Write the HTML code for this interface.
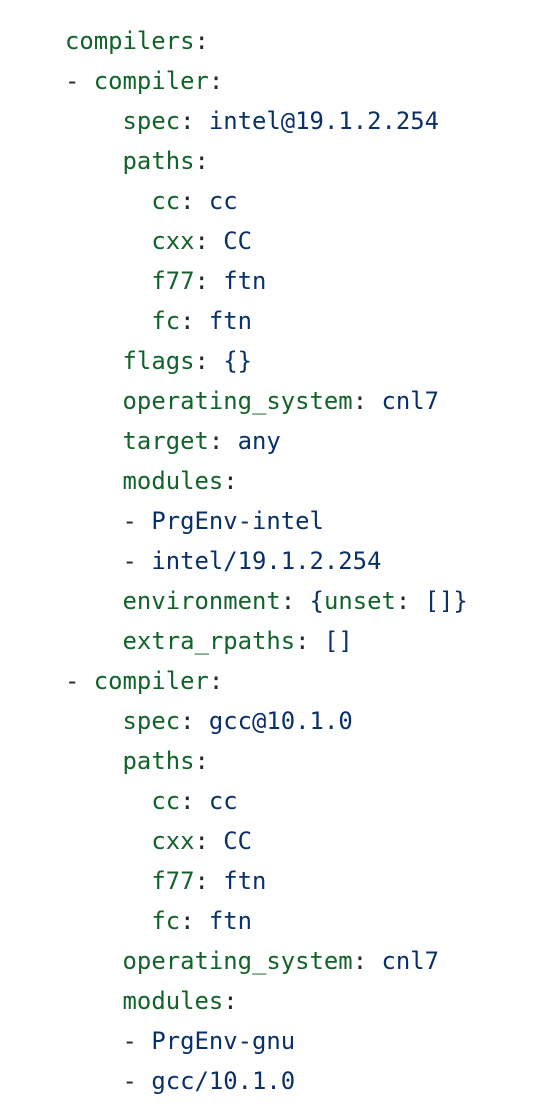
<!DOCTYPE html>
<html><head><style>
html,body{margin:0;padding:0;background:#fff;width:538px;height:1120px;overflow:hidden}
pre{margin:0;position:absolute;left:65px;top:21px;font-family:"DejaVu Sans Mono","Liberation Mono",monospace;font-size:23.9px;line-height:40px;color:#24292f}
.k{color:#116329}.v{color:#0a3069}
</style></head><body>
<pre><span class="k">compilers</span>:
- <span class="k">compiler</span>:
    <span class="k">spec</span>: <span class="v">intel@19.1.2.254</span>
    <span class="k">paths</span>:
      <span class="k">cc</span>: <span class="v">cc</span>
      <span class="k">cxx</span>: <span class="v">CC</span>
      <span class="k">f77</span>: <span class="v">ftn</span>
      <span class="k">fc</span>: <span class="v">ftn</span>
    <span class="k">flags</span>: <span class="v">{}</span>
    <span class="k">operating_system</span>: <span class="v">cnl7</span>
    <span class="k">target</span>: <span class="v">any</span>
    <span class="k">modules</span>:
    - <span class="v">PrgEnv-intel</span>
    - <span class="v">intel/19.1.2.254</span>
    <span class="k">environment</span>: <span class="v">{</span><span class="k">unset</span>: <span class="v">[]}</span>
    <span class="k">extra_rpaths</span>: <span class="v">[]</span>
- <span class="k">compiler</span>:
    <span class="k">spec</span>: <span class="v">gcc@10.1.0</span>
    <span class="k">paths</span>:
      <span class="k">cc</span>: <span class="v">cc</span>
      <span class="k">cxx</span>: <span class="v">CC</span>
      <span class="k">f77</span>: <span class="v">ftn</span>
      <span class="k">fc</span>: <span class="v">ftn</span>
    <span class="k">operating_system</span>: <span class="v">cnl7</span>
    <span class="k">modules</span>:
    - <span class="v">PrgEnv-gnu</span>
    - <span class="v">gcc/10.1.0</span></pre>
</body></html>
